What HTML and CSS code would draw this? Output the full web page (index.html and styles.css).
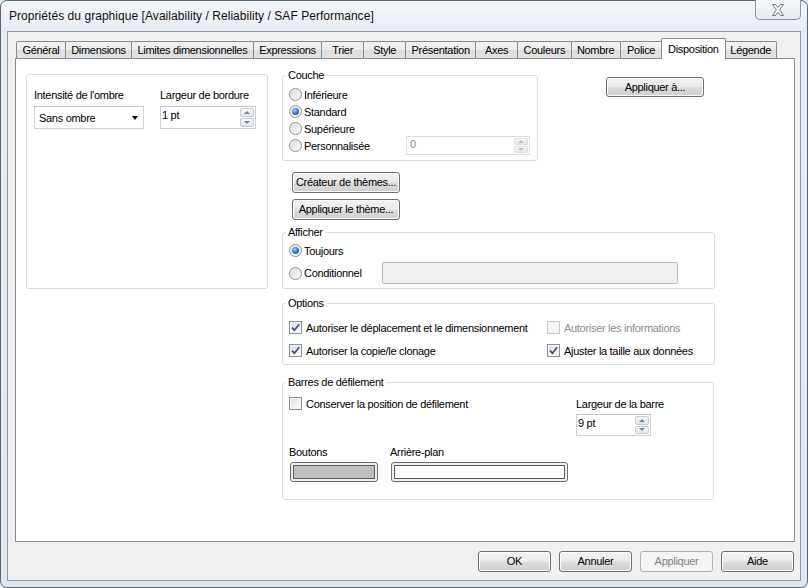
FILE: index.html
```html
<!DOCTYPE html>
<html lang="fr">
<head>
<meta charset="utf-8">
<title>Propriétés du graphique</title>
<link rel="stylesheet" href="styles.css">
</head>
<body>
<div class="window">
  <div class="titlebar">
    <span class="title">Propriétés du graphique [Availability / Reliability / SAF Performance]</span>
    <div class="close">
      <svg width="14" height="12" viewBox="0 0 14 12"><polygon points="1.5,0.5 4.5,0.5 7,3.5 9.5,0.5 12.5,0.5 8.7,5.8 12.5,11.5 9.5,11.5 7,8.2 4.5,11.5 1.5,11.5 5.3,5.8" fill="#fbfcfd" stroke="#6f7884" stroke-width="1"/></svg>
    </div>
  </div>
  <div class="client">
    <div class="tabs">
      <div class="tab">Général</div>
      <div class="tab">Dimensions</div>
      <div class="tab">Limites dimensionnelles</div>
      <div class="tab">Expressions</div>
      <div class="tab">Trier</div>
      <div class="tab">Style</div>
      <div class="tab">Présentation</div>
      <div class="tab">Axes</div>
      <div class="tab">Couleurs</div>
      <div class="tab">Nombre</div>
      <div class="tab">Police</div>
      <div class="tab active">Disposition</div>
      <div class="tab">Légende</div>
    </div>
    <div class="panel">
      <div class="shadowbox">
        <div class="field">
          <div class="lbl">Intensité de l'ombre</div>
          <div class="combo"><span>Sans ombre</span><span class="arrow"></span></div>
        </div>
        <div class="field">
          <div class="lbl">Largeur de bordure</div>
          <div class="spin spin-border"><span class="val">1 pt</span><div class="spinbtns"><span class="sb"><i class="up"></i></span><span class="sb"><i class="down"></i></span></div></div>
        </div>
      </div>
      <div class="rightcol">
        <div class="toprow">
          <fieldset class="group couche">
            <legend>Couche</legend>
            <div class="row"><span class="radio"></span><span>Inférieure</span></div>
            <div class="row"><span class="radio on"></span><span>Standard</span></div>
            <div class="row"><span class="radio"></span><span>Supérieure</span></div>
            <div class="row"><span class="radio"></span><span class="perso-label">Personnalisée</span>
              <div class="spin spin-perso disabled"><span class="val">0</span><div class="spinbtns"><span class="sb"><i class="up"></i></span><span class="sb"><i class="down"></i></span></div></div>
            </div>
          </fieldset>
          <button class="btn apply-to">Appliquer à...</button>
        </div>
        <button class="btn theme theme-create">Créateur de thèmes...</button>
        <button class="btn theme theme-apply">Appliquer le thème...</button>
        <fieldset class="group afficher">
          <legend>Afficher</legend>
          <div class="row"><span class="radio on"></span><span>Toujours</span></div>
          <div class="row row-cond"><span class="radio"></span><span class="cond-label">Conditionnel</span><div class="condfield"></div></div>
        </fieldset>
        <fieldset class="group options">
          <legend>Options</legend>
          <div class="optgrid">
            <div class="row"><span class="check"><svg width="11" height="11" viewBox="0 0 11 11"><path d="M2 5.6 L4.4 8.2 L9.2 2.2" stroke="#3d5287" stroke-width="1.8" fill="none"/></svg></span><span>Autoriser le déplacement et le dimensionnement</span></div>
            <div class="row dis"><span class="check disabled"></span><span>Autoriser les informations</span></div>
            <div class="row"><span class="check"><svg width="11" height="11" viewBox="0 0 11 11"><path d="M2 5.6 L4.4 8.2 L9.2 2.2" stroke="#3d5287" stroke-width="1.8" fill="none"/></svg></span><span>Autoriser la copie/le clonage</span></div>
            <div class="row"><span class="check"><svg width="11" height="11" viewBox="0 0 11 11"><path d="M2 5.6 L4.4 8.2 L9.2 2.2" stroke="#3d5287" stroke-width="1.8" fill="none"/></svg></span><span>Ajuster la taille aux données</span></div>
          </div>
        </fieldset>
        <fieldset class="group barres">
          <legend>Barres de défilement</legend>
          <div class="bartop">
            <div class="row"><span class="check"></span><span>Conserver la position de défilement</span></div>
            <div class="barwidth">
              <div class="row">Largeur de la barre</div>
              <div class="spin spin-bar"><span class="val">9 pt</span><div class="spinbtns"><span class="sb"><i class="up"></i></span><span class="sb"><i class="down"></i></span></div></div>
            </div>
          </div>
          <div class="barbottom">
            <div class="colorcol col-btn">
              <div class="row">Boutons</div>
              <div class="colorbtn btn-gray"><span class="swatch gray"></span></div>
            </div>
            <div class="colorcol">
              <div class="row">Arrière-plan</div>
              <div class="colorbtn btn-white"><span class="swatch white"></span></div>
            </div>
          </div>
        </fieldset>
      </div>
    </div>
    <div class="footer">
      <button class="btn foot">OK</button>
      <button class="btn foot">Annuler</button>
      <button class="btn foot" disabled>Appliquer</button>
      <button class="btn foot">Aide</button>
    </div>
  </div>
</div>
</body>
</html>
```

FILE: styles.css
```css
* { box-sizing: border-box; }
html, body { margin: 0; padding: 0; }
body {
  width: 808px;
  height: 588px;
  overflow: hidden;
  font-family: "Liberation Sans", Arial, sans-serif;
  font-size: 11px;
  letter-spacing: -0.3px;
  color: #000;
  background: #dfe7ef;
}
.window {
  width: 808px;
  height: 588px;
  border: 1px solid #5d6673;
  border-radius: 7px;
  background: linear-gradient(180deg, #f3f6f9 0px, #e8edf3 30px, #dfe6ee 100%);
  display: flex;
  flex-direction: column;
  padding: 0 6px 6px 6px;
}
.titlebar {
  height: 30px;
  display: flex;
  align-items: flex-start;
  justify-content: space-between;
}
.title {
  font-size: 12px;
  letter-spacing: 0.05px;
  line-height: 15px;
  padding: 8px 0 0 2px;
  color: #111;
}
.close {
  width: 46px;
  height: 20px;
  margin-top: -1px;
  border: 1px solid #8b95a2;
  border-top: none;
  border-radius: 0 0 5px 5px;
  background: linear-gradient(180deg, #f6f8fa, #e6ebf1);
  display: flex;
  align-items: center;
  justify-content: center;
}
.client {
  flex: 1;
  border: 1px solid #8e98a4;
  background: #f0f0f0;
  display: flex;
  flex-direction: column;
  padding: 6px 5px 0 7px;
}
.tabs {
  display: flex;
  align-items: flex-end;
  height: 20px;
  padding-left: 1px;
  position: relative;
  z-index: 2;
}
.tab {
  height: 17px;
  min-width: 43px;
  text-align: center;
  line-height: 16px;
  padding: 0 5.4px;
  border: 1px solid #898c95;
  border-bottom: none;
  margin-right: -1px;
  background: linear-gradient(180deg, #f3f3f3 0%, #ebebeb 50%, #dedede 51%, #e3e3e3 100%);
  border-radius: 2px 2px 0 0;
  white-space: nowrap;
}
.tab.active {
  height: 21px;
  margin-bottom: -1px;
  margin-left: -1px;
  margin-right: -2px;
  padding: 2px 6.4px 0;
  background: #fff;
  position: relative;
  z-index: 3;
}
.panel {
  height: 484px;
  border: 1px solid #898c95;
  background: #fff;
  display: flex;
  align-items: flex-start;
  padding: 9px 0 0 10px;
}
.shadowbox {
  width: 242px;
  height: 215px;
  margin-top: 6px;
  border: 1px solid #d5dfe5;
  border-radius: 3px;
  padding: 14px 0 0 7px;
  display: flex;
  gap: 16px;
  align-items: flex-start;
}
.lbl { line-height: 13px; white-space: nowrap; }
.combo {
  margin-top: 4px;
  width: 110px;
  height: 23px;
  border: 1px solid #d0d4d9;
  border-top-color: #c3c8ce;
  display: flex;
  align-items: center;
  justify-content: space-between;
  padding: 0 4px 0 4px;
}
.arrow {
  width: 0; height: 0;
  border-left: 3.5px solid transparent;
  border-right: 3.5px solid transparent;
  border-top: 4px solid #000;
  margin-right: 1px;
  margin-top: 1px;
}
.spin {
  display: flex;
  justify-content: space-between;
  border: 1px solid #cdd2d8;
  border-top-color: #bfc5cc;
  background: #fff;
}
.spin .val { padding: 2px 0 0 1px; line-height: 13px; }
.spin-border { margin-top: 4px; width: 96px; height: 23px; }
.spinbtns {
  display: flex;
  flex-direction: column;
  width: 15px;
  padding: 1px 1px 1px 0;
  gap: 1px;
}
.sb {
  flex: 1;
  border: 1px solid #c6ccd3;
  border-radius: 2px;
  background: linear-gradient(180deg, #f8f8f8, #e4e6e9);
  display: flex;
  align-items: center;
  justify-content: center;
}
.up, .down { width: 0; height: 0; border-left: 3px solid transparent; border-right: 3px solid transparent; }
.up { border-bottom: 3px solid #6f82a6; }
.down { border-top: 3px solid #6f82a6; }
.spin.disabled { border-color: #d9dde1; }
.spin.disabled .val { color: #8d8d8d; padding-left: 3px; }
.spin.disabled .up { border-bottom-color: #b5bfcf; }
.spin.disabled .down { border-top-color: #b5bfcf; }
.spin.disabled .sb { border-color: #dadfe4; }

.rightcol {
  margin-left: 14px;
  margin-top: 1px;
  display: flex;
  flex-direction: column;
  align-items: flex-start;
}
.toprow { display: flex; align-items: flex-start; }
.group {
  margin: 0;
  border: 1px solid #d5dfe5;
  border-radius: 3px;
  padding: 0 6px 0 6px;
  min-width: 0;
}
.group legend {
  padding: 0 2px;
  margin-left: -3px;
  line-height: 13px;
}
.row {
  display: flex;
  align-items: center;
  height: 17px;
  white-space: nowrap;
}
.radio {
  width: 13px;
  height: 13px;
  border-radius: 50%;
  border: 1px solid #8e8f8f;
  background: linear-gradient(135deg, #d2d2d2 0%, #ececec 50%, #fafafa 100%);
  box-shadow: inset 0 0 0 1px #f4f4f4;
  display: inline-flex;
  align-items: center;
  justify-content: center;
  margin-right: 2px;
  flex: none;
}
.radio.on::after {
  content: "";
  width: 7px;
  height: 7px;
  border-radius: 50%;
  background: radial-gradient(circle at 40% 35%, #a8d4fb 0%, #3b7fd0 45%, #163d78 100%);
}
.check {
  width: 13px;
  height: 13px;
  border: 1px solid #8e8f8f;
  background: linear-gradient(135deg, #dcdcdc 0%, #f0f0f0 55%, #fbfbfb 100%);
  box-shadow: inset 0 0 0 1px #f6f6f6;
  display: inline-flex;
  align-items: center;
  justify-content: center;
  margin-right: 4px;
  flex: none;
}
.check.disabled { border-color: #c8c8c8; background: #f4f4f4; box-shadow: none; }
.dis { color: #8d8d8d; }

.couche { width: 256px; padding-top: 4px; padding-bottom: 6px; }
.perso-label { width: 102px; }
.spin-perso { width: 124px; height: 19px; }
.spin-perso .val { padding-top: 1px; }

.btn {
  font-family: "Liberation Sans", Arial, sans-serif;
  font-size: 11px;
  letter-spacing: -0.3px;
  color: #000;
  border: 1px solid #707070;
  border-radius: 3px;
  background: linear-gradient(180deg, #f2f2f2 0%, #ebebeb 48%, #dddddd 52%, #cfcfcf 100%);
  box-shadow: inset 0 0 0 1px #fbfbfb;
  padding: 0;
  line-height: 13px;
}
.btn:disabled {
  border-color: #adb2b5;
  background: #f4f4f4;
  box-shadow: none;
  color: #838383;
}
.apply-to { width: 98px; height: 20px; margin: 8px 0 0 68px; }
.theme { width: 108px; height: 21px; margin-left: 10px; }
.theme-create { margin-top: 11px; }
.theme-apply { margin-top: 6px; }

.afficher { width: 433px; margin-top: 6px; padding-top: 3px; padding-bottom: 4px; }
.row-cond { height: 22px; margin-top: 3px; }
.cond-label { width: 78px; }
.condfield {
  width: 296px;
  height: 22px;
  background: #efefef;
  border: 1px solid #bdbdbd;
  border-radius: 2px;
}

.options { width: 433px; margin-top: 8px; padding-top: 9px; padding-bottom: 5px; }
.optgrid {
  display: grid;
  grid-template-columns: 258px auto;
  row-gap: 6px;
}

.barres { width: 432px; margin-top: 11px; padding-top: 6px; padding-bottom: 17px; }
.bartop { display: grid; grid-template-columns: 287px auto; }
.spin-bar { width: 75px; height: 22px; margin-top: 2px; }
.barbottom { display: flex; margin-top: 7px; }
.col-btn { width: 101px; }
.colorbtn {
  margin-top: 2px;
  height: 20px;
  border: 1px solid #6f6f6f;
  border-radius: 3px;
  background: #ececec;
  padding: 2px;
  display: flex;
}
.btn-gray { width: 88px; margin-left: 1px; }
.btn-white { width: 177px; margin-left: 1px; }
.swatch { flex: 1; border: 1px solid #5f5f5f; }
.swatch.gray { background: #c0c0c0; }
.swatch.white { background: #fff; }

.footer {
  display: flex;
  justify-content: flex-end;
  gap: 8px;
  margin-top: 9px;
  padding-right: 1px;
}
.foot { width: 73px; height: 21px; }
```
